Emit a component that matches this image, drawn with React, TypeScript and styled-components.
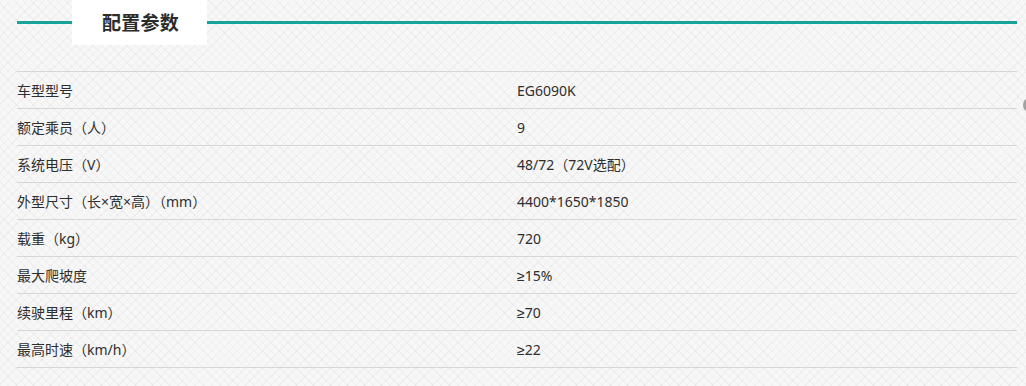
import React from 'react'
import styled, { createGlobalStyle } from 'styled-components'

const specs: [string, string][] = [
  ['车型型号', 'EG6090K'],
  ['额定乘员（人）', '9'],
  ['系统电压（V）', '48/72（72V选配）'],
  ['外型尺寸（长×宽×高）（mm）', '4400*1650*1850'],
  ['载重（kg）', '720'],
  ['最大爬坡度', '≥15%'],
  ['续驶里程（km）', '≥70'],
  ['最高时速（km/h）', '≥22'],
]

const GlobalStyle = createGlobalStyle`
  html, body {
    margin: 0;
    padding: 0;
  }
  body {
    width: 1026px;
    height: 386px;
    overflow: hidden;
    font-family: 'Noto Sans', 'Liberation Sans', 'Noto Sans CJK SC', sans-serif;
    color: #333;
    background-color: #f7f7f7;
    background-image:
      repeating-linear-gradient(45deg, rgba(0, 0, 0, 0.03) 0 1px, transparent 1px 6px),
      repeating-linear-gradient(-45deg, rgba(0, 0, 0, 0.03) 0 1px, transparent 1px 6px);
  }
`

export default function App() {
  return (
    <>
      <GlobalStyle />
      <StyledPage>
        <StyledHeading>
          <StyledRule $width="55px" />
          <StyledTitleBox>
            <StyledTitle>配置参数</StyledTitle>
          </StyledTitleBox>
          <StyledRule $width="810px" />
        </StyledHeading>
        <StyledTable>
          {specs.map(([label, value]) => (
            <StyledRow key={label}>
              <StyledCell>{label}</StyledCell>
              <StyledCell>{value}</StyledCell>
            </StyledRow>
          ))}
        </StyledTable>
        <StyledScrollKnob />
      </StyledPage>
    </>
  )
}

const StyledPage = styled.div`
  position: relative;
  width: 1026px;
  height: 386px;
  padding-left: 17px;
  box-sizing: border-box;
`
const StyledHeading = styled.div`
  display: flex;
  align-items: center;
  height: 45px;
  width: 1000px;
`
const StyledRule = styled.div<{ $width: string }>`
  width: ${({ $width }) => $width};
  height: 3px;
  margin-top: -1px;
  background: #17a398;
`
const StyledTitleBox = styled.div`
  display: flex;
  align-items: center;
  justify-content: center;
  width: 135px;
  height: 45px;
  background: #fff;
`
const StyledTitle = styled.h2`
  margin: 0 0 2px 2px;
  font-size: 19px;
  font-weight: 700;
  letter-spacing: 0.3px;
  color: #2b2b2b;
  font-family: 'Noto Sans CJK SC', sans-serif;
`
const StyledTable = styled.div`
  margin-top: 26px;
  width: 1000px;
  border-top: 1px solid #d6d6d6;
`
const StyledRow = styled.div`
  display: grid;
  grid-template-columns: 500px 500px;
  height: 36px;
  border-bottom: 1px solid #d6d6d6;
`
const StyledCell = styled.div`
  display: flex;
  align-items: center;
  font-size: 14px;
  color: #2e2e2e;
`
const StyledScrollKnob = styled.div`
  position: absolute;
  left: 1023px;
  top: 98px;
  width: 12px;
  height: 14px;
  border-radius: 50%;
  background: #a0a0a0;
`
